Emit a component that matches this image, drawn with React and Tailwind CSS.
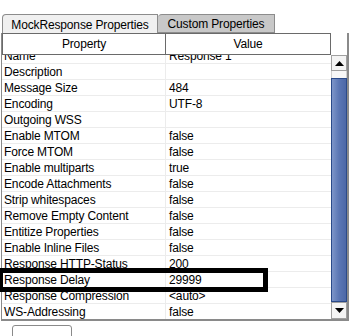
import React from 'react'

const rows = [
  ['Name', 'Response 1'],
  ['Description', ''],
  ['Message Size', '484'],
  ['Encoding', 'UTF-8'],
  ['Outgoing WSS', ''],
  ['Enable MTOM', 'false'],
  ['Force MTOM', 'false'],
  ['Enable multiparts', 'true'],
  ['Encode Attachments', 'false'],
  ['Strip whitespaces', 'false'],
  ['Remove Empty Content', 'false'],
  ['Entitize Properties', 'false'],
  ['Enable Inline Files', 'false'],
  ['Response HTTP-Status', '200'],
  ['Response Delay', '29999'],
  ['Response Compression', '<auto>'],
  ['WS-Addressing', 'false'],
]

function Arrow({ up }) {
  return (
    <svg width="9" height="5" viewBox="0 0 9 5">
      {up ? <path d="M0 5 L4.5 0 L9 5 Z" fill="#000" /> : <path d="M0 0 L4.5 5 L9 0 Z" fill="#000" />}
    </svg>
  )
}

export default function App() {
  return (
    <div
      className="relative h-[336px] w-[360px] overflow-hidden bg-white text-[12px] leading-none tracking-[-0.15px] text-black"
      style={{ fontFamily: '"Liberation Sans", Arial, sans-serif' }}
    >
      {/* tabs */}
      <div className="ml-[2px] mt-[14px] flex h-[19px] items-end">
        <div className="flex h-[19px] w-[156px] items-center justify-center rounded-tl-[4px] border border-b-0 border-[#8c8c8c] bg-[#f0f0f0] pt-[1px]">
          MockResponse Properties
        </div>
        <div className="flex h-[19px] w-[117px] items-center justify-center rounded-tl-[4px] border border-l-0 border-[#8c8c8c] bg-[#c8c8c8] pt-[1px]">
          Custom Properties
        </div>
      </div>

      {/* panel */}
      <div className="ml-[1px] flex h-[288px] w-[348px] border-b-2 border-l border-r-2 border-[#8a8a8a]">
        <div className="flex w-[329px] flex-col">
          <div className="relative z-10 flex h-[22px] shrink-0 bg-white">
            <div className="flex w-[164px] items-center justify-center border border-[#6a6a6a]">Property</div>
            <div className="flex w-[165px] items-center justify-center border border-l-0 border-[#6a6a6a]">Value</div>
          </div>
          <div className="flex-1 overflow-hidden">
            <div className="-mt-[7px]">
              {rows.map(([k, v]) => (
                <div key={k} className="flex h-[16px] border-b border-[#ececec]">
                  <div className="flex w-[164px] items-center border-r border-[#ececec] pl-[2px] pt-[1px]">{k}</div>
                  <div className="flex flex-1 items-center pl-[3px] pt-[1px]">{v}</div>
                </div>
              ))}
            </div>
          </div>
        </div>

        {/* scrollbar */}
        <div className="flex w-[16px] flex-col pt-[22px]">
          <div className="flex h-[16px] items-center justify-center border border-[#a0a0a0] bg-[#f4f4f4]">
            <Arrow up />
          </div>
          <div className="h-[7px] border-x border-[#d0d0d0] bg-[#f8f8f8]" />
          <div className="flex-1 border border-[#2a4a8a] bg-gradient-to-r from-[#7d95c8] via-[#5a76b4] to-[#4d68a6]" />
          <div className="flex h-[17px] items-center justify-center border border-[#a0a0a0] bg-[#f4f4f4]">
            <Arrow />
          </div>
        </div>
      </div>

      {/* bottom button stub */}
      <div className="ml-[12px] mt-[4px] h-[14px] w-[60px] rounded-t-[3px] border border-[#8a8a8a]" />

      {/* highlight */}
      <div className="absolute left-[-2px] top-[268px] h-[24px] w-[270px] border-[5px] border-black" />
    </div>
  )
}
